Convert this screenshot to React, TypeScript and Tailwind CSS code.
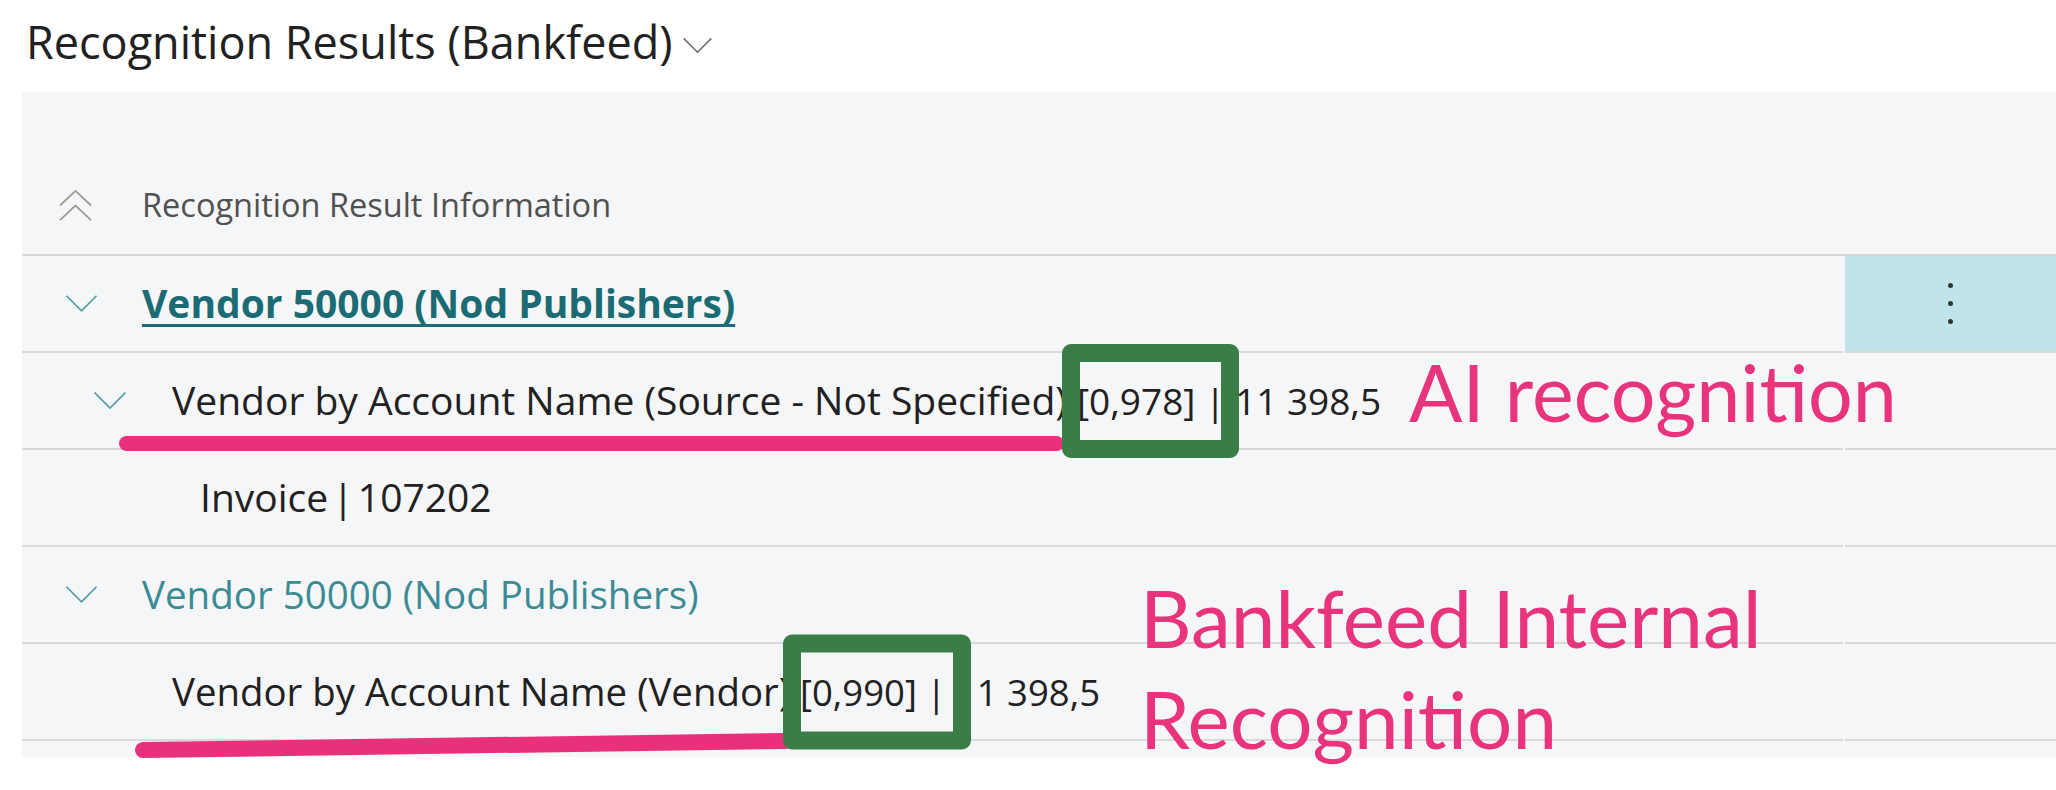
import React from 'react';

function ChevronDown({ className }: { className?: string }) {
  return (
    <svg viewBox="0 0 34 19" fill="none" className={className}>
      <path d="M1.5 1.5 L17 17 L32.5 1.5" stroke="currentColor" strokeWidth="1.7" />
    </svg>
  );
}

function DoubleChevronUp({ className }: { className?: string }) {
  return (
    <svg viewBox="0 0 36 34" fill="none" className={className}>
      <path d="M2 17 L18 2 L34 17" stroke="currentColor" strokeWidth="1.8" />
      <path d="M2 32 L18 17 L34 32" stroke="currentColor" strokeWidth="1.8" />
    </svg>
  );
}

function Row({ children, teal }: { children: React.ReactNode; teal?: boolean }) {
  return (
    <div className="flex h-[97px]">
      <div className="flex flex-1 items-center border-b-2 border-[#d9d9d9]">{children}</div>
      <div
        className={
          teal
            ? 'ml-[2px] flex w-[211px] flex-col items-center justify-center gap-[13px] border-b-2 border-[#d9d9d9] bg-[#bfe5ea]'
            : 'ml-[2px] w-[211px] border-b-2 border-[#d9d9d9]'
        }
      >
        {teal && (
          <>
            <span className="h-[5px] w-[5px] rounded-full bg-[#333]" />
            <span className="h-[5px] w-[5px] rounded-full bg-[#333]" />
            <span className="h-[5px] w-[5px] rounded-full bg-[#333]" />
          </>
        )}
      </div>
    </div>
  );
}

export default function App() {
  return (
    <div className="relative h-[790px] w-[2056px] overflow-hidden bg-white font-['Open_Sans',sans-serif] text-[#212121]">
      <div className="ml-[26px] mt-[12px] flex h-[60px] items-center">
        <span className="text-[45px] leading-[60px]">Recognition Results (Bankfeed)</span>
        <ChevronDown className="ml-[9px] mt-[6px] h-[17px] w-[31px] text-[#6b6b6b]" />
      </div>

      <div className="ml-[22px] mt-[20px] bg-[#f5f6f7] pb-[16px] pt-[64px]">
        <div className="flex h-[100px] items-center border-b-2 border-[#d9d9d9] pl-[36px]">
          <DoubleChevronUp className="h-[33px] w-[35px] text-[#a09a94]" />
          <span className="ml-[49px] text-[32.5px] text-[#505050]">Recognition Result Information</span>
        </div>

        <Row teal>
          <div className="flex items-center pl-[43px]">
            <ChevronDown className="h-[19px] w-[33px] text-[#4f9ca3]" />
            <span className="ml-[44px] text-[39px] font-bold text-[#1a6b73] underline decoration-[3px] underline-offset-[6px]">
              Vendor 50000 (Nod Publishers)
            </span>
          </div>
        </Row>

        <Row>
          <div className="flex items-center pl-[71px]">
            <ChevronDown className="h-[19px] w-[34px] text-[#4f9ca3]" />
            <span className="ml-[45px] whitespace-nowrap text-[39px]">
              Vendor by Account Name (Source - Not Specified){' '}
              <span className="text-[37px]">
                <span className="relative">
                  [0,978] |
                  <span className="absolute left-[-15px] right-[-14px] top-1/2 z-10 h-[114px] -translate-y-1/2 rounded-[9px] border-[18px] border-[#3b7d46]" />
                </span>{' '}
                11 398,5
              </span>
            </span>
          </div>
        </Row>

        <Row>
          <span className="pl-[178px] text-[39px] [word-spacing:-6px]">Invoice | 107202</span>
        </Row>

        <Row>
          <div className="flex items-center pl-[43px]">
            <ChevronDown className="h-[19px] w-[33px] text-[#4f9ca3]" />
            <span className="ml-[44px] text-[38.5px] text-[#3a8b94]">Vendor 50000 (Nod Publishers)</span>
          </div>
        </Row>

        <Row>
          <span className="whitespace-nowrap pl-[150px] text-[38.4px]">
            Vendor by Account Name (Vendor){' '}
            <span className="text-[36.5px]">
              <span className="relative">
                [0,990] |
                <span className="absolute left-[-17px] right-[-25px] top-1/2 z-10 h-[115px] -translate-y-1/2 rounded-[9px] border-[18px] border-[#3b7d46]" />
              </span>{' '}
              11 398,5
            </span>
          </span>
        </Row>
      </div>

      {/* hand-drawn marks */}
      <div className="absolute left-[119px] top-[436px] h-[15px] w-[945px] rounded-full bg-[#e9307b]" />
      <svg className="absolute left-[130px] top-[728px]" width="670" height="32" viewBox="0 0 670 32">
        <path d="M13 22 L656 13" stroke="#e9307b" strokeWidth="16" strokeLinecap="round" />
      </svg>

      <div className="absolute left-[1409px] top-[352px] font-['Lato',sans-serif] text-[79px] leading-[79px] text-[#e8337d]">
        AI recognition
      </div>
      <div className="absolute left-[1140px] top-[567px] font-['Lato',sans-serif] text-[80px] leading-[101px] text-[#e8337d]">
        Bankfeed Internal
        <br />
        Recognition
      </div>
    </div>
  );
}
